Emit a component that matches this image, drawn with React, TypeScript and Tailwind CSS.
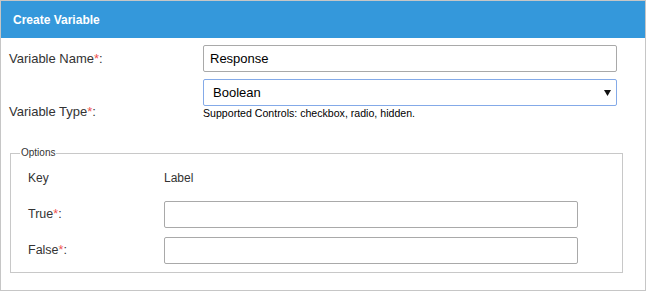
const Req = () => <span className="text-[#ef5350]">*</span>;

export default function App() {
  return (
    <div className="w-[646px] h-[291px] border border-[#c6c6c6] bg-white font-['Liberation_Sans',Arial,sans-serif] text-[#333]">
      <div className="h-[37px] bg-[#3498db] flex items-center pl-[12px] text-[12px] font-bold text-white">
        Create Variable
      </div>

      <div className="pt-[7px] pl-[8px] pr-[22px]">
        <div className="flex items-center">
          <div className="w-[194px] text-[13px]">
            Variable Name<Req />:
          </div>
          <input
            defaultValue="Response"
            className="w-[414px] h-[27px] border border-[#a9a9a9] rounded-[2px] px-[6px] text-[13px] text-black outline-none"
          />
        </div>

        <div className="flex items-end mt-[7px]">
          <div className="w-[194px] text-[13px] leading-[15px] pb-[1px]">
            Variable Type<Req />:
          </div>
          <div className="w-[414px]">
            <div className="relative">
              <select
                defaultValue="Boolean"
                className="appearance-none w-full h-[27px] border border-[#84aae8] rounded-[2px] pl-[9px] text-[13px] text-black outline-none bg-white"
              >
                <option>Boolean</option>
                <option>Text</option>
                <option>Number</option>
              </select>
              <svg
                className="absolute right-[6px] top-[11px] pointer-events-none"
                width="7"
                height="6"
                viewBox="0 0 7 6"
              >
                <path d="M0 0h7L3.5 6z" fill="#111" />
              </svg>
            </div>
            <div className="text-[10.6px] leading-[14px] text-black">
              Supported Controls: checkbox, radio, hidden.
            </div>
          </div>
        </div>

        <fieldset className="mt-[27px] ml-[1px] border border-[#c8c8c8] pl-[17px] pb-[8px]">
          <legend className="ml-[-8px] text-[10px] leading-[12px] px-[1px]">
            Options
          </legend>

          <div className="flex items-center text-[12px] h-[16px] mt-[11px]">
            <div className="w-[136px]">Key</div>
            <div>Label</div>
          </div>

          <div className="flex items-center mt-[15px] text-[12.5px]">
            <div className="w-[136px]">
              True<Req />:
            </div>
            <input className="w-[414px] h-[27px] border border-[#a9a9a9] rounded-[2px] outline-none" />
          </div>

          <div className="flex items-center mt-[9px] text-[12.5px]">
            <div className="w-[136px]">
              False<Req />:
            </div>
            <input className="w-[414px] h-[27px] border border-[#a9a9a9] rounded-[2px] outline-none" />
          </div>
        </fieldset>
      </div>
    </div>
  );
}
